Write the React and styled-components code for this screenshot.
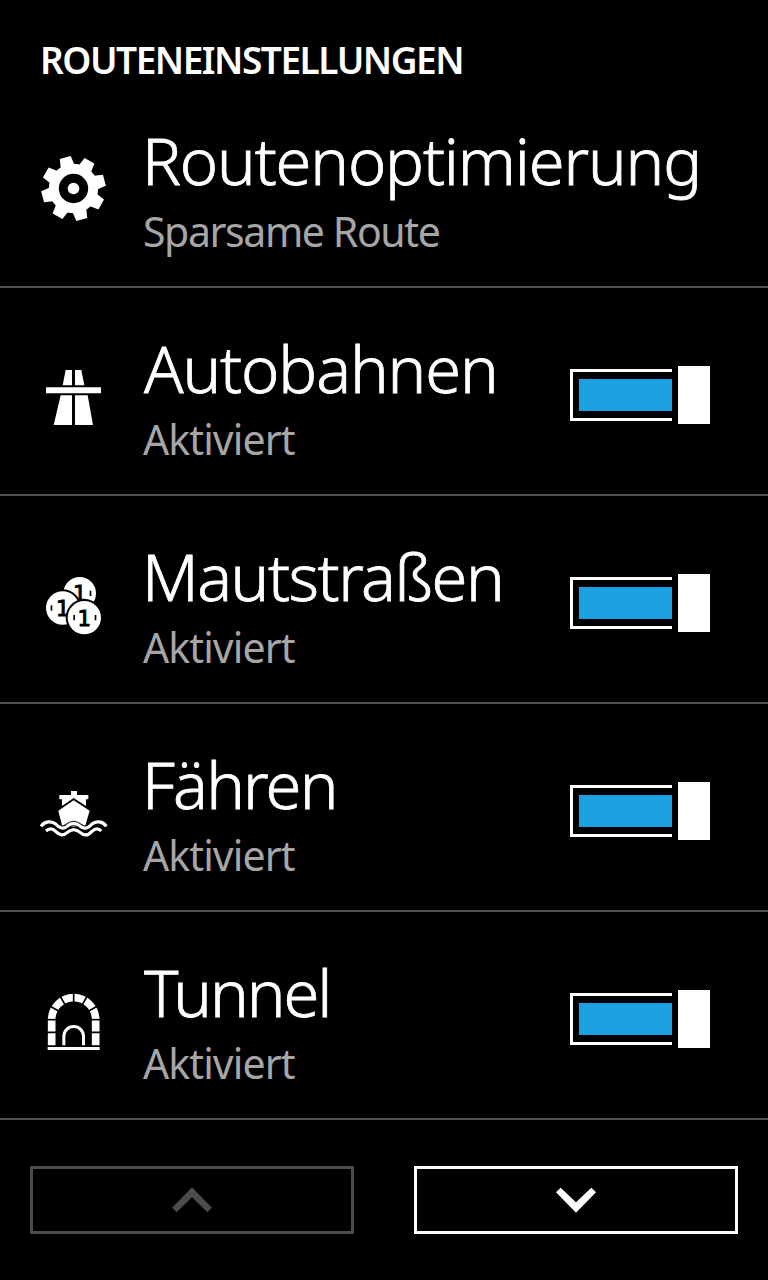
import React from "react";
import styled, { createGlobalStyle } from "styled-components";

const GlobalStyle = createGlobalStyle`
  * {
    box-sizing: border-box;
  }

  body {
    margin: 0;
    background: #000;
  }
`;

const Page = styled.main`
  display: flex;
  flex-direction: column;
  width: 768px;
  height: 1280px;
  overflow: hidden;
  background: #000;
  color: #fff;
  font-family: "Noto Sans", "Open Sans", sans-serif;
`;

const Headline = styled.h1`
  height: 80px;
  margin: 0;
  padding: 35px 0 0 40px;
  font-size: 37px;
  font-weight: 600;
  line-height: 50px;
  letter-spacing: -1.48px;
  white-space: nowrap;
`;

const List = styled.ul`
  margin: 0;
  padding: 0;
  list-style: none;
`;

const Row = styled.li`
  display: flex;
  align-items: flex-start;
  height: 208px;
  padding-right: 58px;
  border-bottom: 2px solid #505050;
`;

const Icon = styled.svg`
  flex: none;
  width: 90px;
  height: 90px;
  margin: 66px 22px 0 30px;
  fill: #fff;
`;

const Texts = styled.div`
  flex: 1;
  min-width: 0;
  padding-top: 38px;
  white-space: nowrap;
`;

const Title = styled.div`
  margin-bottom: 1px;
  padding-left: ${(props) => props.$indent}px;
  font-size: 65px;
  font-weight: 300;
  line-height: 84px;
  letter-spacing: ${(props) => props.$spacing}px;
  -webkit-text-stroke: 0.8px currentColor;
`;

const Status = styled.div`
  padding-left: 1px;
  color: #a6a6a6;
  font-size: 41px;
  line-height: 56px;
  letter-spacing: ${(props) => props.$spacing}px;
`;

const Toggle = styled.button`
  display: flex;
  align-items: center;
  gap: 6px;
  margin: 78px 0 0;
  padding: 0;
  border: 0;
  background: none;
`;

const Track = styled.span`
  width: 102px;
  height: 52px;
  padding: 7px 0 7px 6px;
  border: 3px solid #fff;
  border-right: 0;
`;

const Fill = styled.span`
  display: block;
  height: 32px;
  background: #1ba1e2;
`;

const Knob = styled.span`
  width: 32px;
  height: 58px;
  background: #fff;
`;

const Footer = styled.footer`
  display: flex;
  justify-content: space-between;
  padding: 46px 30px 0;
`;

const PageButton = styled.button`
  display: flex;
  align-items: center;
  justify-content: center;
  width: 324px;
  height: 68px;
  padding: 0;
  border: 3px solid ${(props) => props.$color};
  background: none;
  color: ${(props) => props.$color};
`;

function GearIcon() {
  return (
    <Icon viewBox="0 3 270 270">
      <g transform="translate(130.5 130.5)">
        {[-15, 30, 75, 120, 165, 210, 255, 300].map((angle) => (
          <path key={angle} d="M-22 -62 L-17 -96 H17 L22 -62Z" transform={`rotate(${angle})`} />
        ))}
        <circle r="74" />
        <circle r="44" fill="#000" />
        <circle r="17.5" />
      </g>
    </Icon>
  );
}

function MotorwayIcon() {
  return (
    <Icon viewBox="0 -3 270 270">
      <path d="M107 45H126V91H98Z M135 45H154L163 91H135Z" />
      <path d="M48 97H213V115H48Z" />
      <path d="M92 121H126V210H71Z M135 121H173L189 210H135Z" />
    </Icon>
  );
}

function Coin({ x, y, r, children }) {
  return (
    <g transform={`translate(${x} ${y})`}>
      <circle r={r + 6} fill="#000" />
      <circle r={r} />
      <text
        y="24"
        textAnchor="middle"
        fill="#000"
        stroke="#000"
        strokeWidth="3"
        fontFamily="DejaVu Sans"
        fontSize="64"
      >
        1
      </text>
      {children}
    </g>
  );
}

function CoinsIcon() {
  return (
    <Icon viewBox="0 6 270 270">
      <Coin x={149} y={100} r={49}>
        <path d="M30 -8h5v16h-5z" fill="#000" />
      </Coin>
      <Coin x={98} y={144} r={50}>
        <path d="M-36 -8h5v16h-5z" fill="#000" />
      </Coin>
      <Coin x={163} y={173} r={50}>
        <path d="M-33 -8h5v16h-5z M31 -8h5v16h-5z" fill="#000" />
      </Coin>
    </Icon>
  );
}

function FerryIcon() {
  const upperWave =
    "M33 154C44 138 66 137 77 147C89 161 101 163 111 154C124 143 138 143 151 154C162 163 174 161 186 147C197 137 218 138 229 154";

  return (
    <Icon viewBox="0 -15 270 270">
      <path d="M123 48H141V60H175V73H168V93L131 69L96 93V73H88V60H123Z" />
      <path d="M131 76L179 107L165 155H97L85 107Z" />
      <g fill="none" stroke="#fff" strokeWidth="9.500">
        <path d={upperWave} stroke="#000" strokeWidth="16" />
        <path d={upperWave} />
        <path d="M48 168C58 159 68 160 77 169C89 182 101 183 111 173C124 161 138 161 151 173C162 183 174 182 186 169C195 160 205 159 214 168" />
      </g>
    </Icon>
  );
}

function TunnelIcon() {
  return (
    <Icon viewBox="0 -6 270 270">
      <path d="M65 196V119A66 66 0 0 1 197 119V196" fill="none" stroke="#fff" strokeWidth="23" />
      <g stroke="#000" strokeWidth="5">
        {[-90, -60, -30, 0, 30, 60, 90].map((angle) => (
          <path key={angle} d="M131 38V68" transform={`rotate(${angle} 131 119)`} />
        ))}
        <path d="M50 157H80M182 157H212" />
      </g>
      <path d="M101.500 196V169A29.500 29.500 0 0 1 160.500 169V196" fill="none" stroke="#fff" strokeWidth="9" />
      <path d="M53 201H209V210H53Z" />
    </Icon>
  );
}

const settings = [
  { title: "Routenoptimierung", status: "Sparsame Route", icon: GearIcon, spacing: -1.15, statusSpacing: -1.4 },
  { title: "Autobahnen", status: "Aktiviert", icon: MotorwayIcon, spacing: -1.1, indent: 2, toggle: true },
  { title: "Mautstraßen", status: "Aktiviert", icon: CoinsIcon, spacing: -1.45, toggle: true },
  { title: "Fähren", status: "Aktiviert", icon: FerryIcon, spacing: -1.8, toggle: true },
  { title: "Tunnel", status: "Aktiviert", icon: TunnelIcon, spacing: -2, indent: 2, toggle: true },
];

export default function App() {
  return (
    <Page>
      <GlobalStyle />
      <Headline>ROUTENEINSTELLUNGEN</Headline>
      <List>
        {settings.map(({ title, status, icon: SettingIcon, spacing, statusSpacing = -0.9, indent = 0, toggle }) => (
          <Row key={title}>
            <SettingIcon />
            <Texts>
              <Title $spacing={spacing} $indent={indent}>
                {title}
              </Title>
              <Status $spacing={statusSpacing}>{status}</Status>
            </Texts>
            {toggle && (
              <Toggle aria-label={title}>
                <Track>
                  <Fill />
                </Track>
                <Knob />
              </Toggle>
            )}
          </Row>
        ))}
      </List>
      <Footer>
        <PageButton $color="#4b4b4b" aria-label="Zurück">
          <svg width="40" height="26" viewBox="0 0 120 78" fill="currentColor">
            <path d="M60 1L120 62L106 76L60 31L14 76L0 62Z" />
          </svg>
        </PageButton>
        <PageButton $color="#fff" aria-label="Weiter">
          <svg width="40" height="26" viewBox="0 0 120 78" fill="currentColor">
            <path d="M60 77L120 16L106 2L60 46L14 2L0 16Z" />
          </svg>
        </PageButton>
      </Footer>
    </Page>
  );
}
